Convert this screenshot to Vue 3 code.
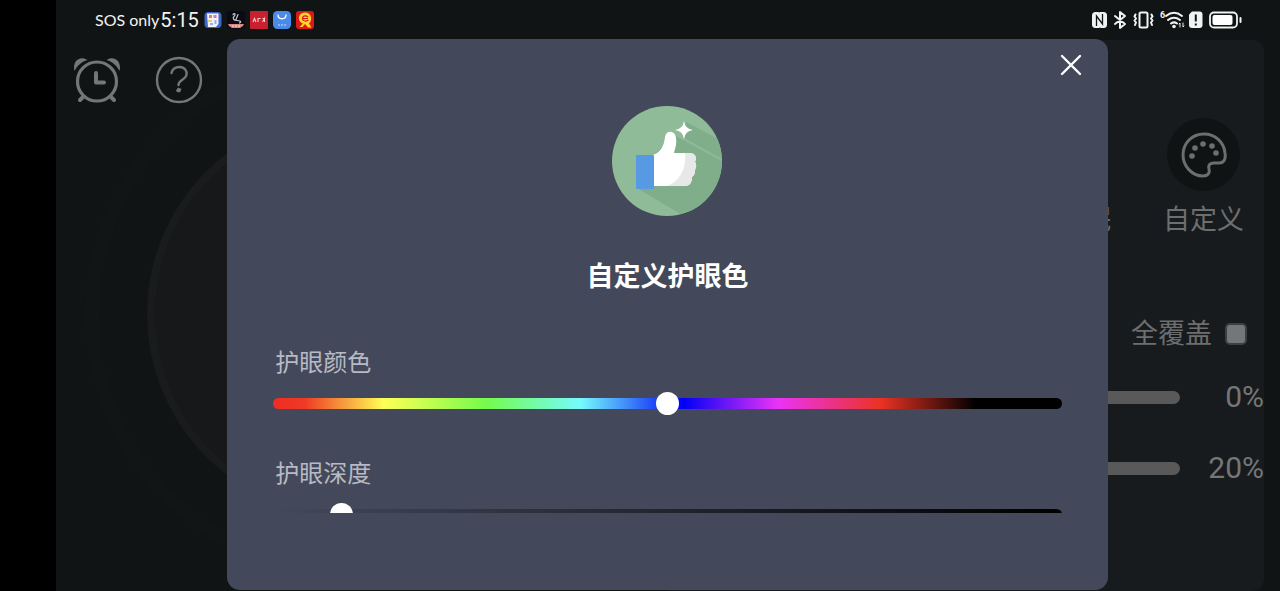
<script setup>
import { ref } from 'vue'

const hue = ref(500)
const depth = ref(74)
const covered = ref(true)
const modes = ['助睡眠', '自定义']
const levels = ['0%', '20%']
</script>

<template>
  <div class="screen">
    <header class="status">
      <span class="carrier">SOS only</span>
      <time class="clock">5:15</time>
      <svg class="app" viewBox="0 0 18 18" aria-hidden="true">
        <rect x="0.5" y="1" width="17" height="16" rx="4" fill="#3f68c8" />
        <path d="M3 2.500h11.500V13L12 16H4z" fill="#f4f2fa" />
        <path d="M5 4h3v3H5z" fill="#dc788c" />
        <path d="M9.500 4h3v3h-3z" fill="#c9809c" />
        <path d="M4 9h4v2H4z" fill="#e7d56b" />
        <path d="M6 12h3v2H6zM10.500 9h2v4h-2z" fill="#8fb0e8" />
      </svg>
      <svg class="app" viewBox="0 0 18 18" aria-hidden="true">
        <rect width="18" height="18" rx="4" fill="#0b0a12" />
        <path d="M6 3.500c2-2 3 0 1 2s0 4 3 4 5 1 2.500 2.500M11 3.500l-2 5" fill="none" stroke="#c7c6d8" stroke-width="1.200" stroke-linecap="round" />
        <path d="M1 13h16l-1 2-3 2H5l-3-2z" fill="#d88980" />
        <path d="M5 15h8" stroke="#f6dcd8" stroke-dasharray="2 1" />
      </svg>
      <svg class="app" viewBox="0 0 18 18" aria-hidden="true">
        <rect width="18" height="18" rx="1" fill="#c9202f" />
        <path d="M3 11l1.500-3.500L6 11M8 11V7.500h2.500M12.500 11l2-3.500v3.500M12.500 7.500h2" fill="none" stroke="#f4c9cc" stroke-width="1.100" />
      </svg>
      <svg class="app" viewBox="0 0 18 18" aria-hidden="true">
        <rect width="18" height="18" rx="4.500" fill="#4a8bea" />
        <path d="M5 4c0 5 8 5 8 0" fill="none" stroke="#fff" stroke-width="1.300" stroke-linecap="round" />
        <path d="M5 14h8" stroke="#c8defb" stroke-width="1.200" stroke-dasharray="2 1" />
      </svg>
      <svg class="app" viewBox="0 0 18 18" aria-hidden="true">
        <rect width="18" height="18" rx="3" fill="#d91a16" />
        <path d="M9 1.500C5 1.500 2.500 4.500 3 8c.3 2.500 2 4 4 4.500L3.500 16h3L9 13l3 3.500h3.500L13 12.500c4-3.500 2.500-11-4-11z" fill="#ffd22e" />
        <path d="M12 6C9 3.500 6 5.500 6.500 8c.5 2.500 4 2.500 6 1M7 7.500h5" fill="none" stroke="#d91a16" stroke-width="1.200" />
      </svg>
      <svg class="system" viewBox="0 0 152 20" role="img" aria-label="NFC, Bluetooth, Wi-Fi 6, battery">
        <rect x="1" y="2" width="15" height="16" rx="3.500" fill="#f1f3f3" />
        <path d="M5.500 16V6l6 8V4" fill="none" stroke="#111415" stroke-width="1.300" />
        <path d="M7 1.500l2 0M8 18.500l2 0" stroke="#111415" stroke-width="1.500" />
        <g fill="none" stroke="#f1f3f3" stroke-linecap="round" stroke-linejoin="round">
          <path d="M24 6l10 8-5 4V2l5 4-10 8" stroke-width="2" />
          <rect x="48.500" y="2.500" width="8" height="15" rx="1.500" stroke-width="2" />
          <path d="M44.500 4.500l-1 2 1.500 2-1.500 2 1.500 2-1 2.500M60.500 4.500l1 2-1.500 2 1.500 2-1.500 2 1 2.500" stroke-width="2" />
          <path d="M75 6c5-4 11-4 16 0M77 10c4-3 8-3 12 0M80 13.500c2-1.500 4-1.500 6 0" stroke-width="2" />
          <path d="M89 17v-4l-1 1M92 13v4l1-1" stroke-width="1" />
          <rect x="119" y="2.500" width="27" height="15" rx="4" stroke-width="1.800" />
          <path d="M149.500 8v4" stroke-width="2" />
        </g>
        <circle cx="83" cy="16.500" r="1.800" fill="#f1f3f3" />
        <rect x="121.500" y="5" width="20" height="10" rx="2" fill="#fff" />
        <path d="M101 1.500h7.500a3 3 0 0 1 3 3v10.500a3 3 0 0 1-3 3h-7.500a3 3 0 0 1-3-3V4.500z" fill="#f1f3f3" />
        <path d="M104.800 4.500v7M104.800 13.500v2" stroke="#111415" stroke-width="2" />
        <text x="69" y="8" class="wifi-gen">6</text>
      </svg>
    </header>

    <main class="app-page">
      <section class="dial-area">
        <svg class="dial" viewBox="0 0 530 530" aria-hidden="true">
          <circle cx="265" cy="265" r="257" fill="none" stroke="#121516" stroke-width="14" />
          <circle cx="265" cy="265" r="198" fill="#171819" stroke="#191b1c" stroke-width="8" />
        </svg>
        <nav class="tools">
          <button type="button" aria-label="Timer">
            <svg viewBox="0 0 48 48" fill="none" stroke="#747677" stroke-linecap="round">
              <circle cx="24" cy="25.500" r="19.500" stroke-width="3.200" />
              <path d="M23 17v9.500h8" stroke-width="4" stroke-linejoin="round" />
              <path d="M9.500 41.500l-2.500 2.500M38.500 41.500l2.500 2.500" stroke-width="4" />
              <path d="M1.500 15C-1 5 7-1 14.500 4 8 6 4 10 1.500 15zM46.500 15C49 5 41-1 33.500 4c6.500 2 10.500 6 13 11z" fill="#747677" stroke="none" />
            </svg>
          </button>
          <button type="button" aria-label="Help">
            <svg viewBox="0 0 48 48" fill="none" stroke="#747677" stroke-linecap="round">
              <circle cx="24" cy="24" r="22" stroke-width="2.400" />
              <path d="M16.500 17c1-4 4-6 8-6 5 0 8 4 7 8-1 5-8 5-8 10" stroke-width="2.400" />
              <path d="M21 34.500l2-3 3.500 1.500-1.500 3.500-3-.5z" fill="#747677" stroke="none" />
            </svg>
          </button>
        </nav>
      </section>

      <section class="panel">
        <div class="modes">
          <button v-for="mode in modes" :key="mode" type="button" class="mode">
            <span class="mode-icon">
              <svg viewBox="0 0 46 46" aria-hidden="true">
                <path d="M23 2C11 2 2 11 2 23c0 11 9 21 20 21 5 0 7-3 6-7-1-4 1-6 5-6h5c5 0 7-4 6-10C43 10 34 2 23 2z" fill="none" stroke="#6c6e6f" stroke-width="3" />
                <g fill="#6c6e6f">
                  <circle cx="11" cy="24" r="2.800" /><circle cx="14" cy="16" r="2.800" />
                  <circle cx="22" cy="12" r="2.800" /><circle cx="31" cy="14" r="2.800" />
                  <circle cx="35" cy="21" r="2.800" />
                </g>
              </svg>
            </span>
            <span>{{ mode }}</span>
          </button>
        </div>
        <label class="cover">
          <span>全覆盖</span>
          <input v-model="covered" type="checkbox" />
        </label>
        <div v-for="level in levels" :key="level" class="level">
          <span class="bar"></span>
          <span class="value">{{ level }}</span>
        </div>
      </section>
    </main>

    <div class="overlay">
      <section class="dialog" role="dialog" aria-labelledby="dialog-title">
        <button type="button" class="close" aria-label="Close">
          <svg viewBox="0 0 22 22"><path d="M2 2l18 18M20 2L2 20" stroke="#fff" stroke-width="2.400" stroke-linecap="round" /></svg>
        </button>
        <div class="dialog-body">
          <svg class="badge" viewBox="0 0 110 110" aria-hidden="true">
            <defs><clipPath id="disc"><circle cx="55" cy="55" r="55" /></clipPath></defs>
            <g clip-path="url(#disc)">
              <rect width="110" height="110" fill="#8fbb98" />
              <path d="M25 82L75 112H112V56L64 30 40 50z" fill="#80ae8b" />
              <path d="M74 16L112 36V54L72 32z" fill="#80ae8b" />
            </g>
            <path d="M41 49c8-3 11-9 12-18 1-7 10-7 11 1 1 6-1 11-2 15h15c7 0 8 5 6 9 2 3 1 6 0 8 0 4-1 5-3 7 0 5-2 9-7 9H41z" fill="#fff" />
            <path d="M73 47h4c7 0 8 5 6 9 2 3 1 6 0 8 0 4-1 5-3 7 0 5-2 9-7 9H55c15-6 19-19 18-33z" fill="#e8e8e9" />
            <rect x="24" y="49" width="18" height="34" rx="1" fill="#5799e2" />
            <path d="M72 15q1 8 9 9-8 1-9 9-1-8-9-9 8-1 9-9z" fill="#fff" />
          </svg>
          <h1 id="dialog-title">自定义护眼色</h1>
          <div class="field">
            <label for="hue">护眼颜色</label>
            <input id="hue" v-model="hue" class="range hue" type="range" min="0" max="1000" />
          </div>
          <div class="field">
            <label for="depth">护眼深度</label>
            <input id="depth" v-model="depth" class="range depth" type="range" min="0" max="1000" />
          </div>
        </div>
      </section>
    </div>
  </div>
</template>

<style>
html, body { margin: 0; background: #000; }
</style>

<style scoped>
.screen {
  position: relative;
  box-sizing: border-box;
  display: flex;
  flex-direction: column;
  height: 100vh;
  margin-left: 56px;
  overflow: hidden;
  background: #111415;
  color: #747677;
  font-family: Roboto, "Noto Sans CJK SC", sans-serif;
}
button {
  padding: 0;
  border: 0;
  background: none;
  color: inherit;
  font: inherit;
}
svg { display: block; }

.status {
  display: flex;
  flex: none;
  align-items: center;
  gap: 5px;
  height: 40px;
  padding: 0 37px 0 39px;
  color: #f1f3f3;
}
.carrier { font: 16px/20px Lato, sans-serif; margin-right: -4px; }
.clock { font: 20px/20px Roboto, sans-serif; }
.app { width: 18px; height: 18px; }
.system { width: 152px; height: 20px; margin-left: auto; }
.wifi-gen { fill: #f1f3f3; font: bold 9px Roboto, sans-serif; }

.app-page {
  display: flex;
  flex: 1;
  min-height: 0;
  padding-right: 16px;
}
.dial-area {
  position: relative;
  flex: 1;
}
.dial {
  position: absolute;
  left: 28px;
  top: 9px;
  width: 530px;
}
.tools {
  position: relative;
  display: flex;
  gap: 34px;
  padding: 16px 17px;
}
.tools svg { width: 48px; height: 48px; }

.panel {
  flex: 1;
  border-radius: 12px;
  background: #171b1d;
  font-size: 27px;
  line-height: 36px;
}
.modes {
  display: flex;
  justify-content: flex-end;
  gap: 52px;
  padding: 78px 20px 0 0;
}
.mode {
  display: flex;
  flex-direction: column;
  align-items: center;
  gap: 11px;
  color: #6c6e6f;
}
.mode-icon {
  display: grid;
  place-items: center;
  width: 73px;
  height: 73px;
  border-radius: 50%;
  background: #101314;
}
.mode-icon svg { width: 46px; height: 46px; }
.cover {
  display: flex;
  align-items: center;
  justify-content: flex-end;
  gap: 13px;
  margin: 78px 17px 0 0;
  color: #6c6e6f;
}
.cover input {
  appearance: none;
  width: 22px;
  height: 22px;
  margin: 0;
  border: 2px solid #3d4042;
  border-radius: 5px;
  background: #747677;
}
.level {
  display: flex;
  align-items: center;
  margin-top: 35px;
}
.cover + .level { margin-top: 27px; }
.bar {
  flex: 1;
  height: 13px;
  border-radius: 7px;
  background: #59595a;
}
.value {
  width: 84px;
  text-align: right;
  font-size: 30px;
}

.overlay {
  position: absolute;
  inset: 39px 1px 1px 0;
  display: flex;
  justify-content: center;
}
.dialog {
  position: relative;
  box-sizing: border-box;
  display: flex;
  width: 72%;
  padding: 0 46px 77px;
  border-radius: 13px;
  background: #43495b;
}
.close {
  position: absolute;
  top: 15px;
  right: 26px;
}
.close svg { width: 22px; height: 22px; }
.dialog-body {
  flex: 1;
  overflow: hidden;
  padding-top: 67px;
}
.badge { width: 110px; height: 110px; margin: 0 auto; }
h1 {
  margin: 41px 0 48px;
  color: #fff;
  font-size: 27px;
  font-weight: 700;
  line-height: 40px;
  text-align: center;
}
.field { margin-bottom: 41px; }
.field label {
  display: block;
  margin: 0 0 11px 2px;
  color: #b8bac4;
  font-size: 24px;
  line-height: 36px;
}
.range {
  appearance: none;
  display: block;
  width: 100%;
  height: 23px;
  margin: 0;
  background: none;
}
.range::-webkit-slider-runnable-track {
  height: 11px;
  border-radius: 6px;
}
.range::-webkit-slider-thumb {
  appearance: none;
  width: 23px;
  height: 23px;
  margin-top: -6px;
  border-radius: 50%;
  background: #fff;
}
.hue::-webkit-slider-runnable-track {
  background: linear-gradient(90deg, #ee2d24 0, #ee3a25 4%, #ffff55 14%, #75fb4c 27%, #75fbfd 39%, #0000f5 52%, #ea33f7 64%, #eb3223 77%, #000 89%);
}
.depth::-webkit-slider-runnable-track {
  background: linear-gradient(90deg, transparent, #000);
}
</style>
